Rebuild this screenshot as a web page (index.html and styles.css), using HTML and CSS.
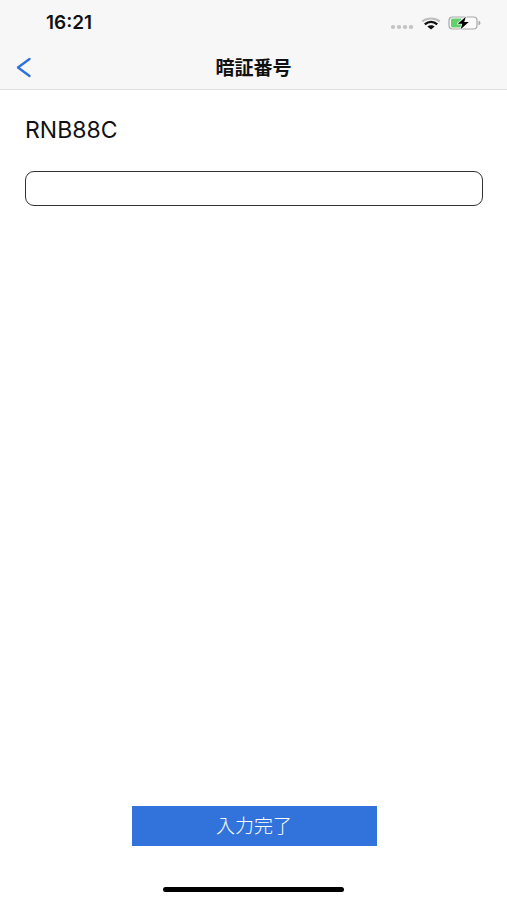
FILE: index.html
```html
<!DOCTYPE html>
<html lang="ja">
<head>
<meta charset="utf-8">
<meta name="viewport" content="width=device-width, initial-scale=1">
<title>暗証番号</title>
<link rel="stylesheet" href="styles.css">
</head>
<body>
<header class="header">
  <div class="status">
    <span class="time">16:21</span>
    <div class="indicators">
      <svg class="signal" width="24" height="6" viewBox="0 0 24 6" fill="#c3c3c5" aria-hidden="true">
        <ellipse cx="3" cy="3" rx="2.200" ry="1.900"/><ellipse cx="9" cy="3" rx="2.200" ry="1.900"/><ellipse cx="15" cy="3" rx="2.200" ry="1.900"/><ellipse cx="21" cy="3" rx="2.200" ry="1.900"/>
      </svg>
      <svg class="wifi" width="20" height="14" viewBox="0 0 20 14" fill="none" aria-hidden="true">
        <path d="M1.200 4.600C6 .6 14 .6 18.800 4.600" stroke="#bdbdbf" stroke-width="2"/>
        <path d="M3.800 7.300C7.500 4.200 12.500 4.200 16.200 7.300" stroke="#111" stroke-width="2.400"/>
        <path d="M6.300 9.600C8.500 7.700 11.500 7.700 13.700 9.600L10 12.500Z" fill="#111"/>
      </svg>
      <svg width="34" height="14" viewBox="0 0 34 14" aria-hidden="true">
        <rect x="1" y="1" width="28" height="12" rx="3.500" fill="#fafafa" stroke="#a9a9ab" stroke-width="1.200"/>
        <path d="M4.500 2.500H13V11.500H4.500Q3 11.500 3 10V4Q3 2.500 4.500 2.500Z" fill="#62d16d"/>
        <path d="M30.500 4.800Q32.500 5.300 32.500 7T30.500 9.200Z" fill="#a9a9ab"/>
        <path d="M17.800 .8L9.800 7.700H14.300L12.600 13.200L20.800 6H16.200Z" fill="#000" stroke="#f7f7f7" stroke-width="1.600" paint-order="stroke" stroke-linejoin="round"/>
      </svg>
    </div>
  </div>
  <nav class="nav">
    <a class="back" href="#" aria-label="戻る">
      <svg width="16" height="22" viewBox="0 0 16 22" fill="none" stroke="#2f73df" stroke-width="2.400" stroke-linecap="round" stroke-linejoin="round" aria-hidden="true"><path d="M13.500 2L2 10.500L13.500 19"/></svg>
    </a>
    <h1 class="title">暗証番号</h1>
  </nav>
</header>
<main class="content">
  <label class="code" for="pin">RNB88C</label>
  <input class="pin" id="pin" type="text">
  <button class="submit" type="button">入力完了</button>
</main>
<footer class="footer"><div class="home"></div></footer>
</body>
</html>
```
FILE: styles.css
```css
* { box-sizing: border-box; }

body {
  margin: 0;
  min-height: 100vh;
  display: flex;
  flex-direction: column;
  background: #fff;
  color: #111;
  font-family: Inter, "Noto Sans CJK JP", sans-serif;
}

.header {
  background: #f7f7f7;
  border-bottom: 1px solid #dedede;
}

.status {
  height: 46px;
  padding: 0 25px 0 46px;
  display: flex;
  align-items: center;
  justify-content: space-between;
}

.time {
  font-size: 19px;
  line-height: 24px;
  font-weight: 600;
}

.indicators {
  display: flex;
  align-items: center;
  gap: 7px;
}

.signal { margin-top: 8px; }

.wifi { margin-top: 2px; }

.nav {
  height: 43px;
  padding: 0 16px;
  display: grid;
  grid-template-columns: 1fr auto 1fr;
  align-items: center;
}

.back { display: flex; }

.title {
  margin: 0;
  padding-top: 2px;
  font-size: 19px;
  line-height: 24px;
  font-weight: 700;
}

.content {
  flex: 1;
  padding: 25px 24px 0 25px;
  display: flex;
  flex-direction: column;
}

.code {
  font-size: 23px;
  line-height: 30px;
}

.pin {
  width: 100%;
  height: 35px;
  margin-top: 26px;
  padding: 0 12px;
  border: 1px solid #333;
  border-radius: 9px;
  background: #fff;
  font: inherit;
  font-size: 18px;
}

.submit {
  width: 245px;
  height: 40px;
  margin: auto auto 0;
  padding: 2px 0 0;
  border: 0;
  background: #3173da;
  color: #fff;
  font-family: inherit;
  font-size: 19px;
  font-weight: 300;
  line-height: 24px;
}

.footer {
  padding: 41px 0 8px;
  display: flex;
  justify-content: center;
}

.home {
  width: 181px;
  height: 5px;
  border-radius: 3px;
  background: #000;
}
```
